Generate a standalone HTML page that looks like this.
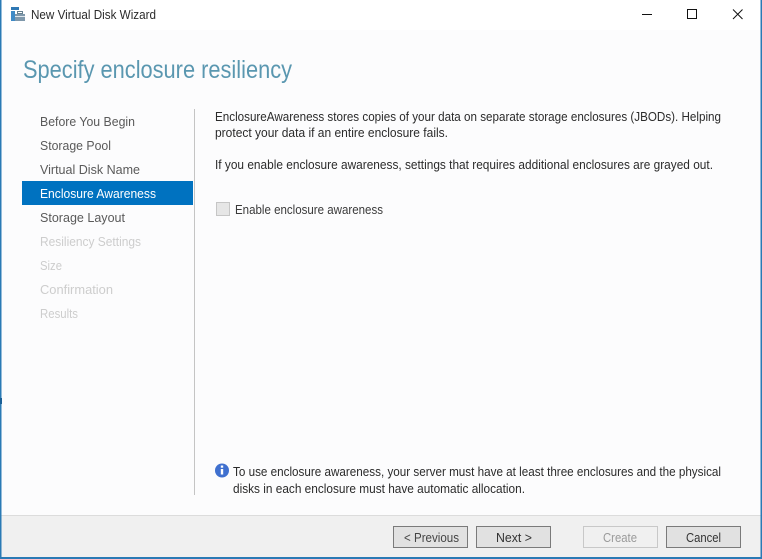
<!DOCTYPE html>
<html><head><meta charset="utf-8"><style>
html,body{margin:0;padding:0;background:#fff}
svg{display:block}
text{font-family:"Liberation Sans",sans-serif;font-size:12.5px;fill:#2b2b2b}
.n{fill:#5a5a5a}.d{fill:#cdcdcd}
</style></head><body>
<svg width="762" height="559" viewBox="0 0 762 559" xmlns="http://www.w3.org/2000/svg">
<rect width="762" height="559" fill="#fff"/>
<rect y="30" width="762" height="485" fill="#fcfcfd"/>
<rect y="515" width="762" height="43" fill="#f0f0f0"/>
<rect y="515" width="762" height="1" fill="#dcdcdc"/>
<rect y="557" width="762" height="2" fill="#2a7ab5"/>
<rect x="0" width="1.5" height="559" fill="#2a7ab5"/>
<rect x="0" y="398" width="2" height="6" fill="#1a5f96"/>
<rect x="760.5" width="1.5" height="559" fill="#2a7ab5"/>
<!-- app icon -->
<rect x="11" y="7" width="8" height="3" fill="#2f78b4"/>
<rect x="11" y="11" width="4" height="10" fill="#3f8ac6"/>
<rect x="15" y="14" width="10" height="7" fill="#7f98ab"/>
<rect x="15" y="16" width="10" height="1" fill="#dfe6ec"/>
<rect x="17.5" y="11.5" width="5" height="2" fill="none" stroke="#66808f"/>
<text x="31" y="19" textLength="125" lengthAdjust="spacingAndGlyphs">New Virtual Disk Wizard</text>
<!-- window controls -->
<rect x="642" y="14" width="10" height="1" fill="#111"/>
<rect x="687.5" y="9.5" width="9" height="9" fill="none" stroke="#111"/>
<path d="M733 9.5L742.5 19M742.5 9.5L733 19" stroke="#111" fill="none"/>
<text x="23" y="78" textLength="269" lengthAdjust="spacingAndGlyphs" style="font-size:25px;fill:#5a97b0">Specify enclosure resiliency</text>
<!-- nav -->
<rect x="22" y="181" width="171" height="24" fill="#0072c0"/>
<rect x="194" y="109" width="1" height="386" fill="#c4c4c4"/>
<text class="n" x="40" y="126" textLength="95" lengthAdjust="spacingAndGlyphs">Before You Begin</text>
<text class="n" x="40" y="150" textLength="71" lengthAdjust="spacingAndGlyphs">Storage Pool</text>
<text class="n" x="40" y="174" textLength="100" lengthAdjust="spacingAndGlyphs">Virtual Disk Name</text>
<text x="40" y="198" textLength="116" lengthAdjust="spacingAndGlyphs" style="fill:#fff">Enclosure Awareness</text>
<text class="n" x="40" y="222" textLength="85" lengthAdjust="spacingAndGlyphs">Storage Layout</text>
<text class="d" x="40" y="246" textLength="101" lengthAdjust="spacingAndGlyphs">Resiliency Settings</text>
<text class="d" x="40" y="270" textLength="22" lengthAdjust="spacingAndGlyphs">Size</text>
<text class="d" x="40" y="294" textLength="73" lengthAdjust="spacingAndGlyphs">Confirmation</text>
<text class="d" x="40" y="318" textLength="38" lengthAdjust="spacingAndGlyphs">Results</text>
<!-- body -->
<text x="215" y="121" textLength="506" lengthAdjust="spacingAndGlyphs">EnclosureAwareness stores copies of your data on separate storage enclosures (JBODs). Helping</text>
<text x="215" y="137" textLength="233" lengthAdjust="spacingAndGlyphs">protect your data if an entire enclosure fails.</text>
<text x="215" y="169" textLength="498" lengthAdjust="spacingAndGlyphs">If you enable enclosure awareness, settings that requires additional enclosures are grayed out.</text>
<rect x="216.5" y="202.5" width="13" height="13" fill="#e6e6e6" stroke="#c6c6c6"/>
<text x="235" y="214" textLength="148" lengthAdjust="spacingAndGlyphs" style="fill:#3a3a3a">Enable enclosure awareness</text>
<!-- info -->
<circle cx="222" cy="470.5" r="7" fill="#3f70cf"/>
<rect x="220.8" y="469" width="2.4" height="5.5" fill="#fff"/>
<rect x="220.8" y="465.5" width="2.4" height="2.2" fill="#fff"/>
<text x="233" y="476" textLength="488" lengthAdjust="spacingAndGlyphs">To use enclosure awareness, your server must have at least three enclosures and the physical</text>
<text x="233" y="493" textLength="292" lengthAdjust="spacingAndGlyphs">disks in each enclosure must have automatic allocation.</text>
<!-- buttons -->
<rect x="393.5" y="526.5" width="74" height="21" fill="#e1e1e1" stroke="#7a7a7a"/>
<rect x="476.5" y="526.5" width="74" height="21" fill="#e1e1e1" stroke="#7a7a7a"/>
<rect x="583.5" y="526.5" width="74" height="21" fill="#f0f0f0" stroke="#c8c8c8"/>
<rect x="666.5" y="526.5" width="74" height="21" fill="#e1e1e1" stroke="#7a7a7a"/>
<text x="404" y="542" textLength="55" lengthAdjust="spacingAndGlyphs" style="fill:#444">&lt; Previous</text>
<text x="496" y="542" textLength="36" lengthAdjust="spacingAndGlyphs" style="fill:#333">Next &gt;</text>
<text x="603" y="542" textLength="34" lengthAdjust="spacingAndGlyphs" style="fill:#9a9a9a">Create</text>
<text x="686" y="542" textLength="35" lengthAdjust="spacingAndGlyphs" style="fill:#333">Cancel</text>
</svg>
</body></html>
